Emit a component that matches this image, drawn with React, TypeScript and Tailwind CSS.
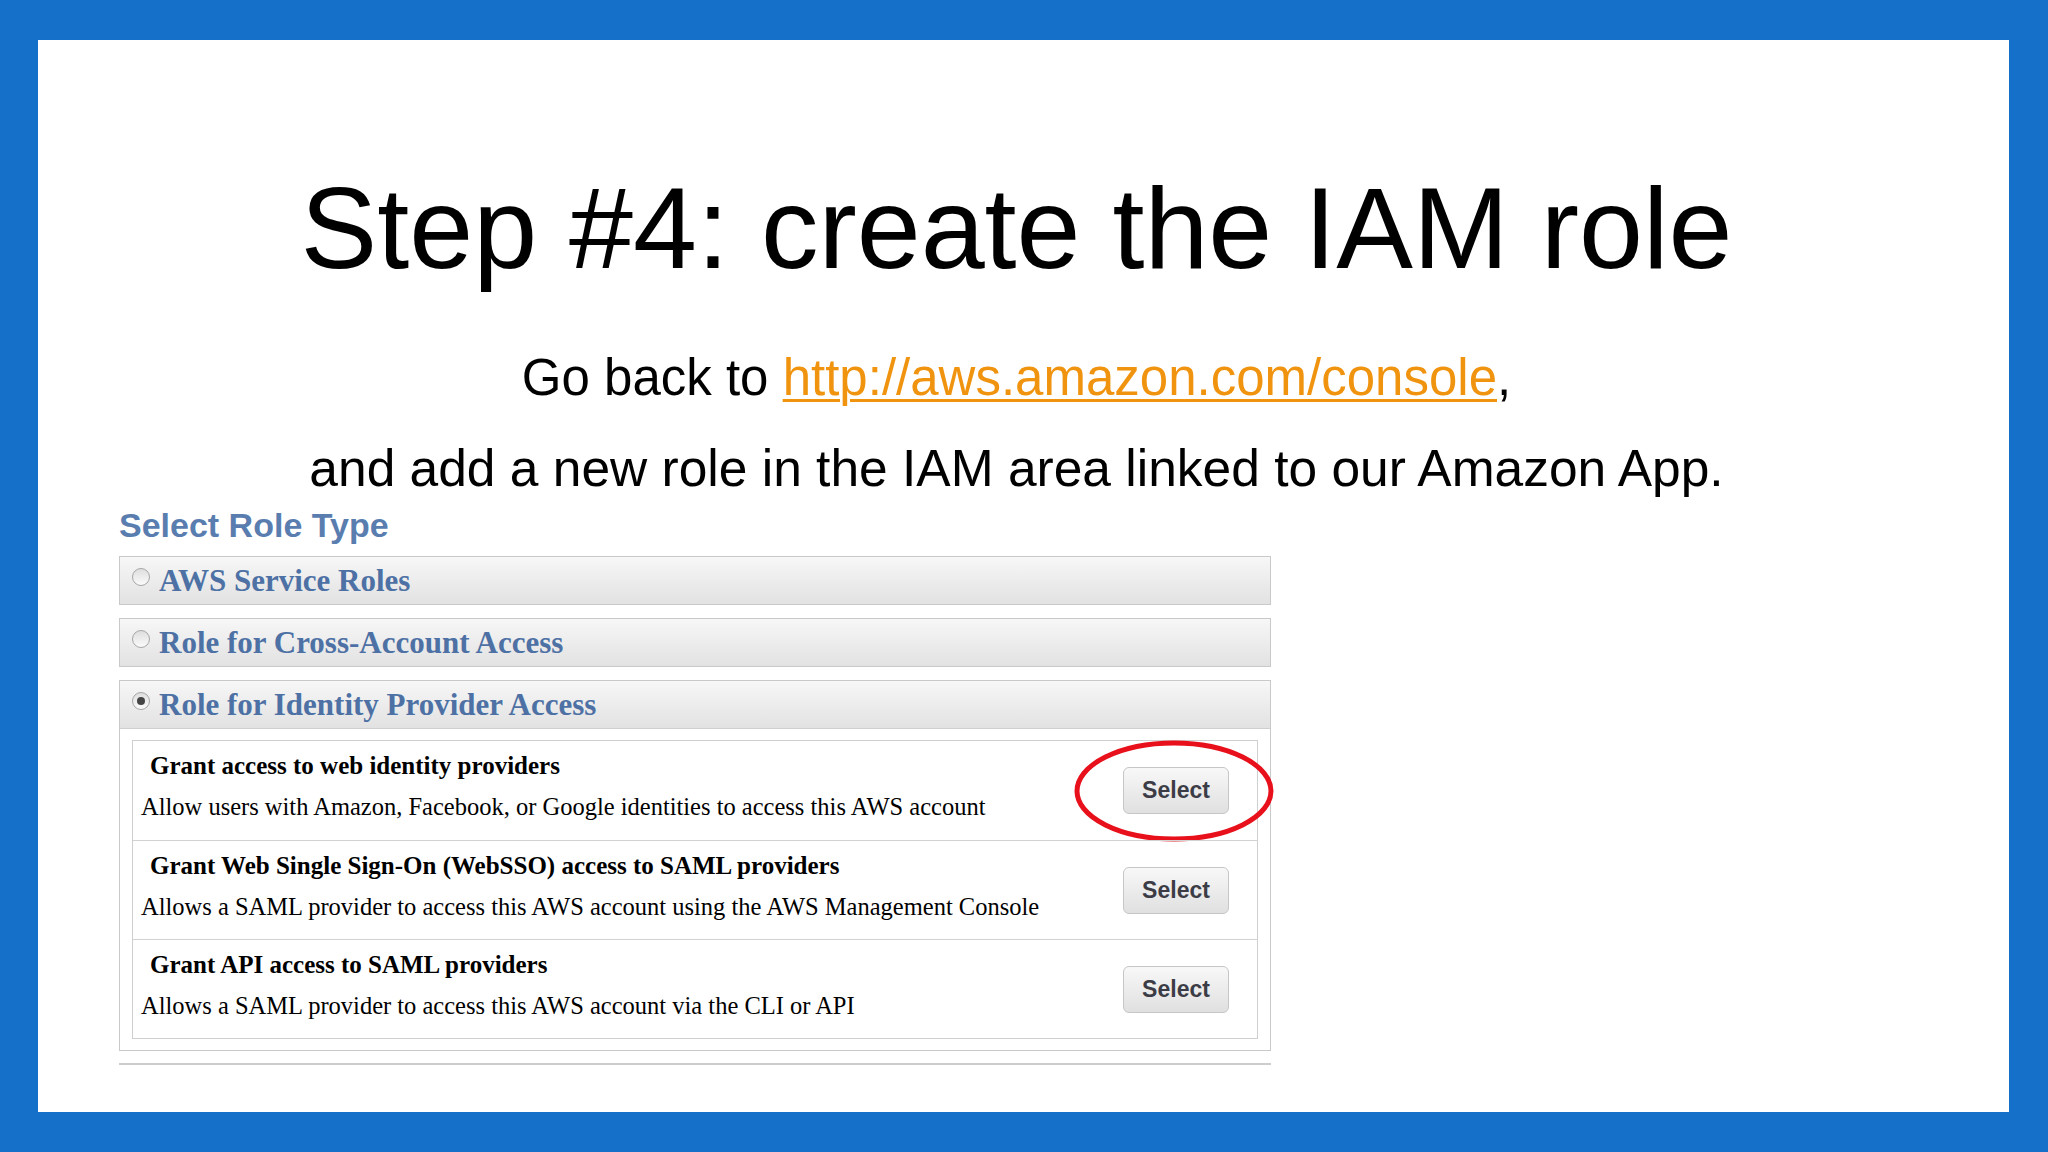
import React from 'react';

const roleTypes = [
  { label: 'AWS Service Roles', checked: false },
  { label: 'Role for Cross-Account Access', checked: false },
];

const providerOptions = [
  {
    title: 'Grant access to web identity providers',
    description: 'Allow users with Amazon, Facebook, or Google identities to access this AWS account',
    circled: true,
  },
  {
    title: 'Grant Web Single Sign-On (WebSSO) access to SAML providers',
    description: 'Allows a SAML provider to access this AWS account using the AWS Management Console',
    circled: false,
  },
  {
    title: 'Grant API access to SAML providers',
    description: 'Allows a SAML provider to access this AWS account via the CLI or API',
    circled: false,
  },
];

function Radio({ checked }: { checked: boolean }) {
  return (
    <span className="mt-[-8px] flex h-[18px] w-[18px] shrink-0 items-center justify-center rounded-full border border-[#a6a6a6] bg-gradient-to-b from-[#dedede] to-[#fbfbfb]">
      {checked && <span className="h-[8px] w-[8px] rounded-full bg-[#444]" />}
    </span>
  );
}

function RoleHeader({ label, checked }: { label: string; checked: boolean }) {
  return (
    <div className="flex h-[47px] items-center gap-[9px] bg-gradient-to-b from-[#f7f7f7] to-[#e2e2e2] pl-[12px]">
      <Radio checked={checked} />
      <span className="font-['Liberation_Serif',serif] text-[31px] font-bold leading-none text-[#4d71a4]">
        {label}
      </span>
    </div>
  );
}

export default function App() {
  return (
    <div className="h-[1152px] w-[2048px] bg-[#1570c9] pb-[40px] pl-[38px] pr-[39px] pt-[40px]">
      <div className="flex h-full flex-col bg-white font-['Liberation_Sans',Arial,sans-serif] text-black">
        {/* Slide text */}
        <div className="pr-[14px] text-center">
          <h1 className="mt-[131px] text-[115px] font-normal leading-[115px]">
            Step #4: create the IAM role
          </h1>
          <p className="mt-[62px] text-[51px] leading-[60px]">
            Go back to{' '}
            <a
              href="#"
              className="text-[#f0930f] underline decoration-[3px] underline-offset-[4px]"
            >
              http://aws.amazon.com/console
            </a>
            ,
          </p>
          <p className="mt-[30px] text-[51.5px] leading-[60px]">
            and add a new role in the IAM area linked to our Amazon App.
          </p>
        </div>

        {/* AWS console capture */}
        <div className="ml-[81px] mt-[7px] w-[1152px]">
          <h2 className="text-[34px] font-bold leading-[40px] text-[#5a7db0]">Select Role Type</h2>

          <div className="mt-[11px] flex flex-col gap-[13px]">
            {roleTypes.map((role) => (
              <div key={role.label} className="border border-[#c9c9c9]">
                <RoleHeader label={role.label} checked={role.checked} />
              </div>
            ))}

            <div className="border border-[#c9c9c9]">
              <div className="border-b border-[#cfcfcf]">
                <RoleHeader label="Role for Identity Provider Access" checked />
              </div>
              <div className="pb-[11px] pl-[12px] pr-[12px] pt-[11px]">
                <div className="border border-[#cfcfcf]">
                  {providerOptions.map((opt, i) => (
                    <div
                      key={opt.title}
                      className={`relative flex h-[99px] items-center justify-between ${i > 0 ? 'border-t border-[#d2d2d2]' : ''}`}
                    >
                      <div className="flex flex-col pb-[8px] font-['Liberation_Serif',serif] text-black">
                        <span className="pl-[17px] text-[25px] font-bold leading-[30px]">{opt.title}</span>
                        <span className="mt-[11px] pl-[8px] text-[24.5px] leading-[30px]">{opt.description}</span>
                      </div>
                      <button className="mr-[28px] flex h-[47px] w-[106px] items-center justify-center rounded-[6px] border border-[#c6c6c6] bg-gradient-to-b from-[#f8f8f8] to-[#e0e0e0] text-[23px] font-bold text-[#3c3c46]">
                        Select
                      </button>
                      {opt.circled && (
                        <svg
                          className="pointer-events-none absolute left-[941px] top-[-1px] overflow-visible"
                          width="200"
                          height="102"
                          viewBox="0 0 200 102"
                        >
                          <ellipse cx="100" cy="51" rx="97" ry="48" fill="none" stroke="#e8111b" strokeWidth="5" />
                        </svg>
                      )}
                    </div>
                  ))}
                </div>
              </div>
            </div>
          </div>

          <div className="mt-[12px] h-[2px] bg-[#cdcdcd]" />
        </div>
      </div>
    </div>
  );
}
